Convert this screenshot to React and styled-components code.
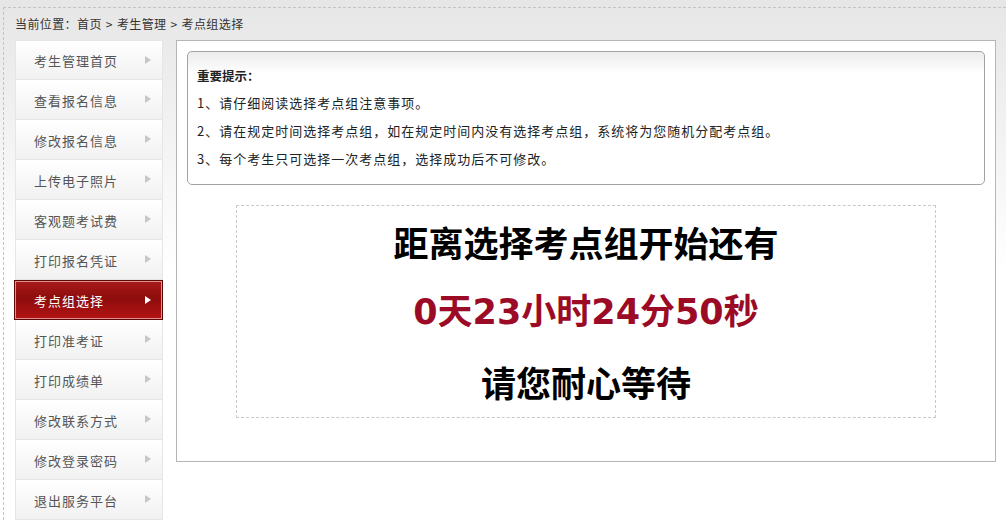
import React from 'react'
import styled, { createGlobalStyle } from 'styled-components'

const GlobalStyle = createGlobalStyle`
    html, body {
        margin: 0;
        padding: 0;
    }
    body {
        background: linear-gradient(#e6e6e6 0, #ffffff 270px) no-repeat;
        background-color: #fff;
        font-family: "Noto Sans CJK SC", "Noto Sans", sans-serif;
        color: #333;
        height: 522px;
        overflow: hidden;
    }
`

const Wrapper = styled.div`
    margin: 7px 0 0 3px;
    border-top: 1px dashed #c4c4c4;
    border-left: 1px dashed #c4c4c4;
    padding: 0 0 0 11px;
`

const Breadcrumb = styled.div`
    height: 32px;
    line-height: 32px;
    font-size: 12px;
    letter-spacing: 0.4px;
    color: #333;
    span { margin: 0 4px; }
`

const Body = styled.div`
    display: flex;
    gap: 13px;
    align-items: flex-start;
`

const Sidebar = styled.ul`
    list-style: none;
    margin: 0;
    padding: 0;
    width: 148px;
`

const Item = styled.li`
    position: relative;
    height: ${p => p.$active ? '38px' : '39px'};
    line-height: ${p => p.$active ? '40px' : '42px'};
    overflow: hidden;
    border: 1px solid ${p => p.$active ? '#5c0707' : '#e6e6e6'};
    border-top: ${p => p.$active ? '1px solid #5c0707' : 'none'};
    margin-left: ${p => p.$active ? '-1px' : '0'};
    box-shadow: ${p => p.$active ? 'inset 0 0 0 1px #e29191' : 'none'};
    background: ${p => p.$active
        ? 'linear-gradient(#a81b1b 0, #8e0c0c 45%, #b31414 100%)'
        : 'linear-gradient(#ffffff 0, #f1f1f1 100%)'};
    color: ${p => p.$active ? '#fff' : '#555'};
    font-size: 13px;
    letter-spacing: 1px;
    padding-left: ${p => p.$active ? '19px' : '18px'};

    &:first-child { border-top: 1px solid #e6e6e6; height: 38px; line-height: 40px; }

    &::after {
        content: '';
        position: absolute;
        right: 11px;
        top: 15px;
        border-style: solid;
        border-width: 4px 0 4px 6px;
        border-color: transparent transparent transparent ${p => p.$active ? '#fff' : '#c6c6c6'};
    }
`

const Main = styled.div`
    border: 1px solid #b5b5b5;
    background: #fff;
    padding: 10px;
    box-sizing: content-box;
    width: 798px;
    height: 400px;
`

const Notice = styled.div`
    height: 132px;
    border: 1px solid #a2a2a2;
    border-radius: 5px;
    background: linear-gradient(#ececec 0, #ffffff 22px);
    padding: 0 9px;
    font-size: 13px;
    letter-spacing: 1px;
    color: #222;
`

const NoticeTitle = styled.div`
    font-weight: bold;
    font-size: 12.5px;
    letter-spacing: 0;
    margin-top: 12px;
    line-height: 24px;
`

const NoticeLine = styled.div`
    line-height: 28px;
    &:nth-of-type(2) { margin-top: 1px; }
`

const Countdown = styled.div`
    width: 698px;
    margin: 20px auto 0;
    border: 1px dashed #c9c9c9;
    padding: 1px 0 0;
    text-align: center;
`

const BigLine = styled.div`
    font-family: ${p => p.$red ? '"DejaVu Sans", "Noto Sans CJK SC", sans-serif' : 'inherit'};
    font-size: 35px;
    font-weight: bold;
    line-height: 70px;
    color: ${p => p.$red ? '#9b0b26' : '#000'};
`

const menu = [
    '考生管理首页', '查看报名信息', '修改报名信息', '上传电子照片',
    '客观题考试费', '打印报名凭证', '考点组选择', '打印准考证',
    '打印成绩单', '修改联系方式', '修改登录密码', '退出服务平台'
]

export default function App() {
    return (
        <>
            <GlobalStyle />
            <Wrapper>
                <Breadcrumb>
                    当前位置：首页<span>&gt;</span>考生管理<span>&gt;</span>考点组选择
                </Breadcrumb>
                <Body>
                    <Sidebar>
                        {menu.map((m, i) => (
                            <Item key={m} $active={i === 6}>{m}</Item>
                        ))}
                    </Sidebar>
                    <Main>
                        <Notice>
                            <NoticeTitle>重要提示：</NoticeTitle>
                            <NoticeLine>1、请仔细阅读选择考点组注意事项。</NoticeLine>
                            <NoticeLine>2、请在规定时间选择考点组，如在规定时间内没有选择考点组，系统将为您随机分配考点组。</NoticeLine>
                            <NoticeLine>3、每个考生只可选择一次考点组，选择成功后不可修改。</NoticeLine>
                        </Notice>
                        <Countdown>
                            <BigLine>距离选择考点组开始还有</BigLine>
                            <BigLine $red>0天23小时24分50秒</BigLine>
                            <BigLine>请您耐心等待</BigLine>
                        </Countdown>
                    </Main>
                </Body>
            </Wrapper>
        </>
    )
}
